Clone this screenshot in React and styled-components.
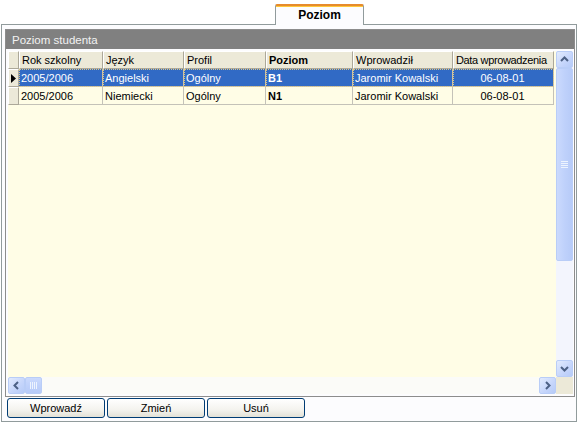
import React from "react";
import styled, { createGlobalStyle } from "styled-components";

const Global = createGlobalStyle`
  html, body { margin: 0; padding: 0; background: #ffffff; }
  body { font-family: "Liberation Sans", Arial, sans-serif; font-size: 11px; color: #000; }
  * { box-sizing: border-box; }
`;

const Page = styled.div`
  width: 578px;
  height: 424px;
  display: flex;
  flex-direction: column;
  background: #ffffff;
  overflow: hidden;
`;

const TabStrip = styled.div`
  height: 24px;
  display: flex;
  align-items: flex-end;
  padding-left: 275px;
`;

const Tab = styled.div`
  position: relative;
  z-index: 1;
  width: 89px;
  height: 21px;
  margin-bottom: -1px;
  border-left: 1px solid #919b9c;
  border-right: 1px solid #919b9c;
  border-top: 2px solid #e68b2c;
  border-radius: 2px 2px 0 0;
  box-shadow: inset 0 1px 0 #ffc83c;
  background: #fcfcfe;
  display: flex;
  align-items: center;
  justify-content: center;
  font-weight: bold;
  font-size: 12px;
  padding-bottom: 1px;
`;

const Frame = styled.div`
  margin: 0 1px;
  height: 398px;
  border: 1px solid #919b9c;
  background: #fcfcfe;
  padding: 4px 1px 3px 3px;
  display: flex;
  flex-direction: column;
  gap: 1px;
`;

const Panel = styled.div`
  width: 570px;
  height: 368px;
  border: 1px solid #8c8c8c;
  display: flex;
  flex-direction: column;
  background: #fcfcfe;
`;

const PanelTitle = styled.div`
  height: 20px;
  background: #808080;
  color: #f2f2f2;
  padding-left: 6px;
  display: flex;
  align-items: center;
  font-size: 11.5px;
  border-bottom: 1px solid #fcfcfe;
`;

const PanelBody = styled.div`
  flex: 1;
  padding: 1px 1px 2px 2px;
  display: grid;
  grid-template-columns: 548px 17px;
  grid-template-rows: 326px 17px;
`;

const GridArea = styled.div`
  background: #fffde6;
  overflow: hidden;
`;

const Table = styled.div`
  display: grid;
  grid-template-columns: 11px 84px 81px 82px 87px 100px 101px;
  grid-auto-rows: 18px;
`;

const HeadCell = styled.div`
  background: #ece9d8;
  border-top: 1px solid #ffffff;
  border-left: 1px solid #ffffff;
  border-right: 1px solid #aca899;
  border-bottom: 1px solid #aca899;
  padding-left: 2px;
  display: flex;
  align-items: center;
  white-space: nowrap;
  overflow: hidden;
  letter-spacing: ${(p) => (p.$tight ? "-0.35px" : "0")};
  font-weight: ${(p) => (p.$bold ? "bold" : "normal")};
`;

const RowHead = styled.div`
  background: #ece9d8;
  border-top: 1px solid #ffffff;
  border-left: 1px solid #ffffff;
  border-right: 1px solid #aca899;
  border-bottom: 1px solid #aca899;
  display: flex;
  align-items: center;
  justify-content: center;
`;

const Cell = styled.div`
  background: ${(p) => (p.$sel ? "#316ac5" : "transparent")};
  color: ${(p) => (p.$sel ? "#ffffff" : "#000000")};
  border-right: 1px solid #c4c2b8;
  border-bottom: 1px solid #c4c2b8;
  outline: ${(p) => (p.$sel ? "1px dotted #d8c48a" : "none")};
  outline-offset: -1px;
  padding: 0 3px 0 2px;
  display: flex;
  align-items: center;
  justify-content: ${(p) => (p.$center ? "center" : "flex-start")};
  font-weight: ${(p) => (p.$bold ? "bold" : "normal")};
  white-space: nowrap;
  overflow: hidden;
`;

const VScroll = styled.div`
  display: flex;
  flex-direction: column;
  background: #f3f5fd;
`;

const HScroll = styled.div`
  display: flex;
  background: #fbfbf8;
`;

const Corner = styled.div`
  background: #ece9d8;
`;

const ArrowBtn = styled.div`
  width: 17px;
  height: 17px;
  flex: none;
  border: 1px solid #b9cdf7;
  border-radius: 2px;
  background: linear-gradient(135deg, #e2ebfe 0%, #c5d5fb 60%, #b6cbf8 100%);
  display: flex;
  align-items: center;
  justify-content: center;
`;

const VThumb = styled.div`
  height: 193px;
  border: 1px solid #b9cdf7;
  border-radius: 2px;
  background: linear-gradient(90deg, #cbdafd 0%, #bfd1fb 50%, #b7cbf8 100%);
  display: flex;
  align-items: center;
  justify-content: center;
`;

const Track = styled.div`
  flex: 1;
`;

const HThumb = styled.div`
  width: 17px;
  border: 1px solid #b9cdf7;
  border-radius: 2px;
  background: linear-gradient(180deg, #cbdafd 0%, #bfd1fb 50%, #b7cbf8 100%);
  display: flex;
  align-items: center;
  justify-content: center;
`;

const ButtonRow = styled.div`
  display: flex;
  gap: 2px;
  padding-left: 2px;
`;

const Button = styled.button`
  width: 98px;
  height: 20px;
  border: 1px solid #003c74;
  border-radius: 3px;
  background: linear-gradient(180deg, #ffffff 0%, #f4f3ee 60%, #e3e1d6 100%);
  font-family: "Liberation Sans", Arial, sans-serif;
  font-size: 11px;
  font-weight: normal;
  color: #000;
  padding: 0;
`;

const Chevron = ({ dir }) => {
  const paths = {
    up: "M4 9 L7.5 5.5 L11 9",
    down: "M4 6 L7.5 9.5 L11 6",
    left: "M9 4 L5.5 7.5 L9 11",
    right: "M6 4 L9.5 7.5 L6 11",
  };
  return (
    <svg width="15" height="15" viewBox="0 0 15 15">
      <path d={paths[dir]} fill="none" stroke="#4d6185" strokeWidth="2" />
    </svg>
  );
};

const Grip = ({ vertical }) =>
  vertical ? (
    <svg width="7" height="8" viewBox="0 0 7 8">
      {[0, 2, 4, 6].map((y) => (
        <line key={y} x1="0" x2="7" y1={y + 0.5} y2={y + 0.5} stroke="#eef4fe" />
      ))}
    </svg>
  ) : (
    <svg width="8" height="7" viewBox="0 0 8 7">
      {[0, 2, 4, 6].map((x) => (
        <line key={x} y1="0" y2="7" x1={x + 0.5} x2={x + 0.5} stroke="#eef4fe" />
      ))}
    </svg>
  );

const columns = [
  { label: "Rok szkolny" },
  { label: "Język" },
  { label: "Profil" },
  { label: "Poziom", bold: true },
  { label: "Wprowadził" },
  { label: "Data wprowadzenia", tight: true },
];

const rows = [
  ["2005/2006", "Angielski", "Ogólny", "B1", "Jaromir Kowalski", "06-08-01"],
  ["2005/2006", "Niemiecki", "Ogólny", "N1", "Jaromir Kowalski", "06-08-01"],
];

export default function App() {
  return (
    <Page>
      <Global />
      <TabStrip>
        <Tab>Poziom</Tab>
      </TabStrip>
      <Frame>
        <Panel>
          <PanelTitle>Poziom studenta</PanelTitle>
          <PanelBody>
            <GridArea>
              <Table>
                <RowHead />
                {columns.map((c) => (
                  <HeadCell key={c.label} $bold={c.bold} $tight={c.tight}>
                    {c.label}
                  </HeadCell>
                ))}
                {rows.map((r, ri) => (
                  <React.Fragment key={ri}>
                    <RowHead>
                      {ri === 0 && (
                        <svg width="5" height="9" viewBox="0 0 5 9">
                          <path d="M0 0 L5 4.5 L0 9 Z" fill="#000" />
                        </svg>
                      )}
                    </RowHead>
                    {r.map((v, ci) => (
                      <Cell
                        key={ci}
                        $sel={ri === 0}
                        $bold={ci === 3}
                        $center={ci === 5}
                      >
                        {v}
                      </Cell>
                    ))}
                  </React.Fragment>
                ))}
              </Table>
            </GridArea>
            <VScroll>
              <ArrowBtn>
                <Chevron dir="up" />
              </ArrowBtn>
              <VThumb>
                <Grip vertical />
              </VThumb>
              <Track />
              <ArrowBtn>
                <Chevron dir="down" />
              </ArrowBtn>
            </VScroll>
            <HScroll>
              <ArrowBtn>
                <Chevron dir="left" />
              </ArrowBtn>
              <HThumb>
                <Grip />
              </HThumb>
              <Track />
              <ArrowBtn>
                <Chevron dir="right" />
              </ArrowBtn>
            </HScroll>
            <Corner />
          </PanelBody>
        </Panel>
        <ButtonRow>
          <Button>Wprowadź</Button>
          <Button>Zmień</Button>
          <Button>Usuń</Button>
        </ButtonRow>
      </Frame>
    </Page>
  );
}
